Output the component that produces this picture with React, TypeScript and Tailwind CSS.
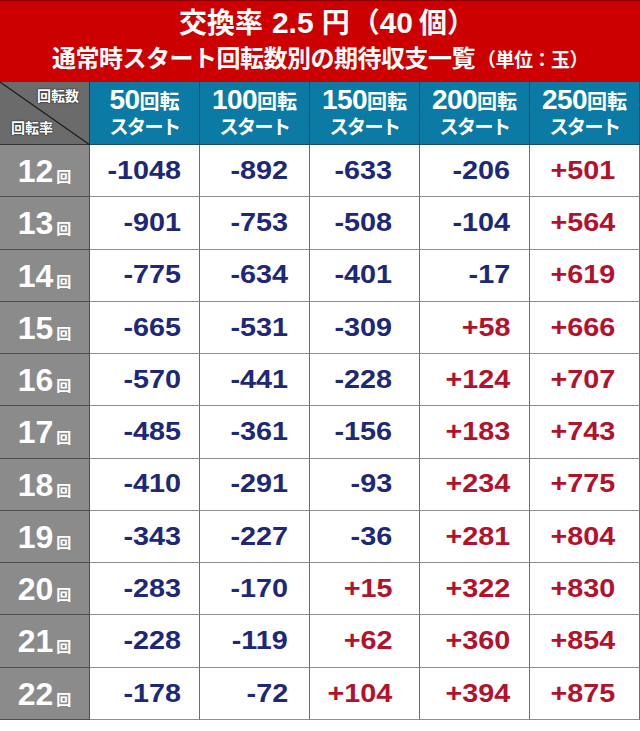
const font = { fontFamily: '"Liberation Sans", "Noto Sans CJK JP", sans-serif' };

const cols = ['50', '100', '150', '200', '250'];

const rows: [number, string[]][] = [
  [12, ['-1048', '-892', '-633', '-206', '+501']],
  [13, ['-901', '-753', '-508', '-104', '+564']],
  [14, ['-775', '-634', '-401', '-17', '+619']],
  [15, ['-665', '-531', '-309', '+58', '+666']],
  [16, ['-570', '-441', '-228', '+124', '+707']],
  [17, ['-485', '-361', '-156', '+183', '+743']],
  [18, ['-410', '-291', '-93', '+234', '+775']],
  [19, ['-343', '-227', '-36', '+281', '+804']],
  [20, ['-283', '-170', '+15', '+322', '+830']],
  [21, ['-228', '-119', '+62', '+360', '+854']],
  [22, ['-178', '-72', '+104', '+394', '+875']],
];

// right padding differs a little per column in the original
const padR = ['pr-[18px]', 'pr-[21px]', 'pr-[27px]', 'pr-[19px]', 'pr-[24px]'];

export default function App() {
  return (
    <div className="w-[640px] h-[731px] bg-white font-bold" style={font}>
      <div className="h-[82px] bg-[#cc0000] border-t border-[#8a0000] flex flex-col items-center text-white">
        <div className="mt-[4px] text-[28px] leading-[36px] flex items-baseline">
          <span>交換率</span>
          <span className="ml-[9px] text-[30px]">2.5</span>
          <span className="ml-[8px]">円</span>
          <span className="ml-[2px]">（</span>
          <span className="text-[30px]">40</span>
          <span className="ml-[6px]">個</span>
          <span className="-mr-[14px]">）</span>
        </div>
        <div className="mt-[2px] text-[24px] leading-[30px] tracking-[-0.5px] flex items-baseline">
          <span>通常時スタート回転数別の期待収支一覧</span>
          <span className="ml-[2px] text-[19px] tracking-[-0.5px]">（単位：玉）</span>
        </div>
      </div>

      <div className="grid grid-cols-[90px_repeat(5,110px)]">
        {/* corner */}
        <div className="relative h-[63px] bg-[#6b6b6b] border-r border-b border-[#333] text-white text-[14px] [text-shadow:0_0_2px_#222,0_0_1px_#222]">
          <svg className="absolute inset-0" width="90" height="63" viewBox="0 0 90 63">
            <line x1="0" y1="0" x2="90" y2="63" stroke="#1a1a1a" strokeWidth="1.2" />
          </svg>
          <span className="absolute right-[10px] top-[4px]">回転数</span>
          <span className="absolute left-[11px] bottom-[5px]">回転率</span>
        </div>
        {cols.map((c) => (
          <div
            key={c}
            className="h-[63px] bg-[#0b7ba6] border-r border-b border-[#1f4a5e] flex flex-col items-center justify-center text-white"
          >
            <div className="flex items-baseline leading-[28px]">
              <span className="text-[28px] tracking-[-0.5px]">{c}</span>
              <span className="text-[20px]">回転</span>
            </div>
            <div className="text-[19px] leading-[24px] tracking-[-1.5px]">スタート</div>
          </div>
        ))}

        {rows.map(([n, vals]) => (
          <Row key={n} n={n} vals={vals} />
        ))}
      </div>
    </div>
  );
}

function Row({ n, vals }: { n: number; vals: string[] }) {
  return (
    <>
      <div className="h-[52.27px] bg-[#8b8b8b] border-r border-b border-[#4d4d4d] flex items-baseline justify-center pt-[9px] text-white">
        <span className="text-[32px] leading-[34px]">{n}</span>
        <span className="ml-[3px] text-[15px]">回</span>
      </div>
      {vals.map((v, i) => (
        <div
          key={i}
          className={`h-[52.27px] border-r border-b border-r-[#6e6e6e] border-b-[#8e8e8e] flex items-center justify-end ${padR[i]} text-[25px] ${
            v.startsWith('+') ? 'text-[#b3122c]' : 'text-[#1d2878]'
          }`}
        >
          <span className="inline-block origin-right scale-x-[1.15]">{v}</span>
        </div>
      ))}
    </>
  );
}
